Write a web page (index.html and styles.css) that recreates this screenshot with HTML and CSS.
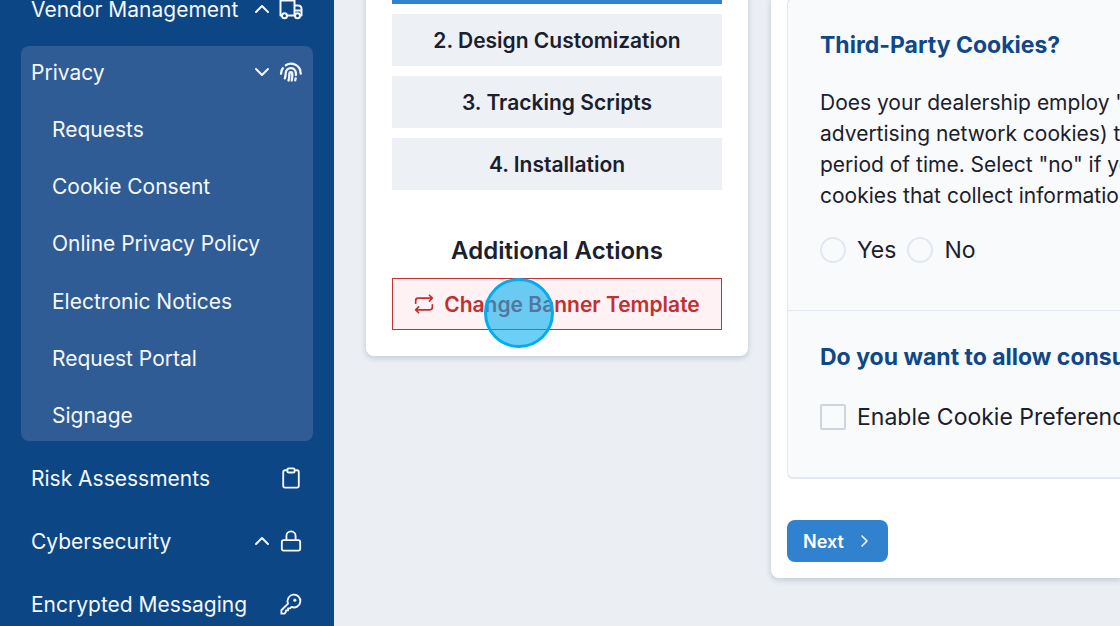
FILE: index.html
```html
<!DOCTYPE html>
<html lang="en">
<head>
<meta charset="utf-8">
<title>Cookie Consent</title>
<link rel="stylesheet" href="styles.css">
</head>
<body>
<div class="layout">
  <nav class="sidebar">
    <a class="nav-item" href="#">Vendor Management
      <span class="icons">
        <svg class="chevron" viewBox="0 0 16 16"><path d="M2 11l6-6 6 6"/></svg>
        <svg class="icon" viewBox="0 0 24 24"><path d="M3 18.500H1.500V3.500H15.500V18.500H8M15.500 8.500H19C21 8.500 22.500 10 22.500 12V18.500H21M15.500 13.500H22.500M15.500 18.500H16"/><circle cx="5.500" cy="18.800" r="2.500"/><circle cx="18.500" cy="18.800" r="2.500"/></svg>
      </span>
    </a>
    <div class="nav-group">
      <a class="nav-item" href="#">Privacy
        <span class="icons">
          <svg class="chevron" viewBox="0 0 16 16"><path d="M2 5l6 6 6-6"/></svg>
          <svg class="icon bold" viewBox="0 0 24 24"><path d="M2 13.800C2 11.500 2.500 9.900 3.800 8.200M6.800 5.300C12.800 1.500 21.600 5 21.700 13.700M5.800 18.300C6.600 17 6.500 15.500 6.700 13C7.100 6.500 16.500 6.300 16.900 13C17 14 17 14.500 16.900 15M9.500 20.500C10.500 17.800 10.300 15.500 10.400 13.500C10.500 11.800 13.200 11.800 13.300 13.500C13.400 16 13.200 18.200 12.700 20.500M16.700 18.300L16.200 20.300"/></svg>
        </span>
      </a>
      <div class="subnav">
        <a href="#">Requests</a>
        <a href="#">Cookie Consent</a>
        <a href="#">Online Privacy Policy</a>
        <a href="#">Electronic Notices</a>
        <a href="#">Request Portal</a>
        <a href="#">Signage</a>
      </div>
    </div>
    <a class="nav-item" href="#">Risk Assessments
      <span class="icons">
        <svg class="icon small" viewBox="0 0 24 24"><path d="M8 3.500H5.500a2 2 0 0 0-2 2V20.500a2 2 0 0 0 2 2H18.500a2 2 0 0 0 2-2V5.500a2 2 0 0 0-2-2H16"/><rect x="8" y="1.500" width="8" height="4.500" rx="1.500"/></svg>
      </span>
    </a>
    <a class="nav-item" href="#">Cybersecurity
      <span class="icons">
        <svg class="chevron" viewBox="0 0 16 16"><path d="M2 11l6-6 6 6"/></svg>
        <svg class="icon small" viewBox="0 0 24 24"><rect x="2" y="11" width="20" height="11.500" rx="2"/><path d="M7 11V6.500a5 5 0 0 1 10 0V11"/></svg>
      </span>
    </a>
    <a class="nav-item" href="#">Encrypted Messaging
      <span class="icons">
        <svg class="icon small" viewBox="0 0 24 24"><path d="M8.800 11.500A7 7 0 1 1 12.500 15.200L11 16.700H8.800V19H6.500V20.500L5 22.500H1.500V18.800Z"/><circle class="dot" cx="16.200" cy="7.800" r="1.700"/></svg>
      </span>
    </a>
  </nav>

  <section class="card steps-card">
    <div class="steps">
      <button class="step active" type="button">1. Configuration</button>
      <button class="step" type="button">2. Design Customization</button>
      <button class="step" type="button">3. Tracking Scripts</button>
      <button class="step" type="button">4. Installation</button>
    </div>
    <h2 class="actions-title">Additional Actions</h2>
    <div class="action">
      <button class="danger" type="button">
        <svg class="swap" viewBox="0 0 24 24"><path d="M2 11V8a3 3 0 0 1 3-3H22M18.500 1.500L22 5l-3.500 3.500M22 13v3a3 3 0 0 1-3 3H2M5.500 15.500L2 19l3.500 3.500"/></svg>
        Change Banner Template
      </button>
      <span class="pointer"></span>
    </div>
  </section>

  <main class="card form-card">
    <div class="panel">
      <section class="question">
        <h3>Third-Party Cookies?</h3>
        <p>Does your dealership employ "<br>advertising network cookies) th<br>period of time. Select "no" if yo<br>cookies that collect information</p>
        <div class="options">
          <label><input type="radio" name="third-party">Yes</label>
          <label><input type="radio" name="third-party">No</label>
        </div>
      </section>
      <section class="question">
        <h3>Do you want to allow consu</h3>
        <div class="options">
          <label><input type="checkbox">Enable Cookie Preferenc</label>
        </div>
      </section>
    </div>
    <button class="next" type="button">Next
      <svg viewBox="0 0 16 16"><path d="M6 3l5 5-5 5"/></svg>
    </button>
  </main>
</div>
</body>
</html>
```
FILE: styles.css
```css
* { box-sizing: border-box; }
body {
  margin: 0;
  overflow: hidden;
  background: #ebeff4;
  color: #1a202c;
  font: 21px/31px Inter, "Liberation Sans", sans-serif;
}
button, input { font: inherit; margin: 0; }
button { cursor: pointer; }
h2, h3, p { margin: 0; }
svg { fill: none; stroke: currentColor; stroke-width: 2; stroke-linecap: round; stroke-linejoin: round; flex: none; }

.layout {
  display: grid;
  grid-template-columns: 334px 382px minmax(0, 1fr);
  align-items: start;
  min-height: 100vh;
}

.sidebar {
  align-self: stretch;
  display: flex;
  flex-direction: column;
  gap: 11px;
  margin-top: -17px;
  padding: 0 21px;
  background: #0c4685;
  color: #f5f8fc;
}
.sidebar a { color: inherit; text-decoration: none; }
.nav-item {
  display: flex;
  flex: none;
  align-items: center;
  justify-content: space-between;
  height: 52px;
  padding: 0 10px;
  white-space: nowrap;
}
.icons { display: flex; align-items: center; gap: 9px; }
.icon { width: 24px; height: 24px; }
.icon.bold { stroke-width: 2.3; }
.icon.small { width: 22px; height: 22px; margin: 0 1px; }
.chevron { width: 16px; height: 16px; }
.icon .dot { fill: currentColor; stroke: none; }
.nav-group { border-radius: 8px; background: #305c95; }
.subnav {
  display: grid;
  grid-auto-rows: 1fr;
  gap: 10px;
  height: 343px;
  padding: 8px 0 2px;
}
.subnav a { display: flex; align-items: center; padding-left: 31px; }

.card {
  background: #fff;
  box-shadow: 0 2px 5px 1px rgba(30, 50, 80, .16);
}
.steps-card {
  margin-left: 32px;
  margin-right: -32px;
  margin-top: -48px;
  padding: 0 26px 26px;
  border-radius: 0 0 8px 8px;
}
.steps { display: grid; gap: 10px; }
.step {
  height: 52px;
  border: 0;
  background: #edf0f5;
  color: #1a202c;
  font-weight: 600;
}
.step.active { background: #3182ce; color: #fff; }
.actions-title {
  margin: 45px 0 11px;
  font-size: 24px;
  line-height: 32px;
  font-weight: 600;
  text-align: center;
}
.action { position: relative; }
.danger {
  display: flex;
  align-items: center;
  justify-content: center;
  gap: 10px;
  width: 100%;
  height: 52px;
  padding: 0;
  border: 1px solid #c53030;
  background: #fff2f4;
  color: #c12f30;
  font-weight: 600;
  white-space: nowrap;
}
.swap { width: 20px; height: 20px; }
.pointer {
  position: absolute;
  left: 92px;
  top: 0;
  width: 70px;
  height: 70px;
  border: 3px solid #00adef;
  border-radius: 50%;
  background: rgba(0, 173, 239, .58);
  pointer-events: none;
}

.form-card {
  margin-left: 55px;
  padding: 0 0 16px 16px;
  border-radius: 0 0 0 8px;
}
.panel {
  margin-top: -2px;
  border: 1px solid #e2e8f0;
  border-right: 0;
  border-bottom-width: 2px;
  border-radius: 6px 0 0 6px;
  background: #f9fafc;
  overflow: hidden;
  white-space: nowrap;
}
.question { padding: 30px 0 42px 32px; }
.question + .question { border-top: 1px solid #e2e8f0; }
.question h3 {
  margin-bottom: 26px;
  color: #0f4787;
  font-size: 23px;
  line-height: 32px;
  font-weight: 700;
}
.question p { margin-bottom: 21px; }
.options { display: flex; gap: 11px; font-size: 23px; line-height: 36px; }
.options label { display: flex; align-items: center; gap: 11px; }
.options input {
  appearance: none;
  flex: none;
  width: 26px;
  height: 26px;
  border: 2px solid #e2e8f0;
}
.options input[type="radio"] { border-radius: 50%; }
.options input[type="checkbox"] { border-color: #cbd5e0; border-radius: 2px; }
.next {
  display: flex;
  align-items: center;
  gap: 12px;
  height: 42px;
  margin-top: 41px;
  padding: 0 16px;
  border: 0;
  border-radius: 8px;
  background: #3182ce;
  color: #fff;
  font-size: 18px;
  font-weight: 600;
}
.next svg { width: 16px; height: 16px; stroke-width: 1.500; }
```
